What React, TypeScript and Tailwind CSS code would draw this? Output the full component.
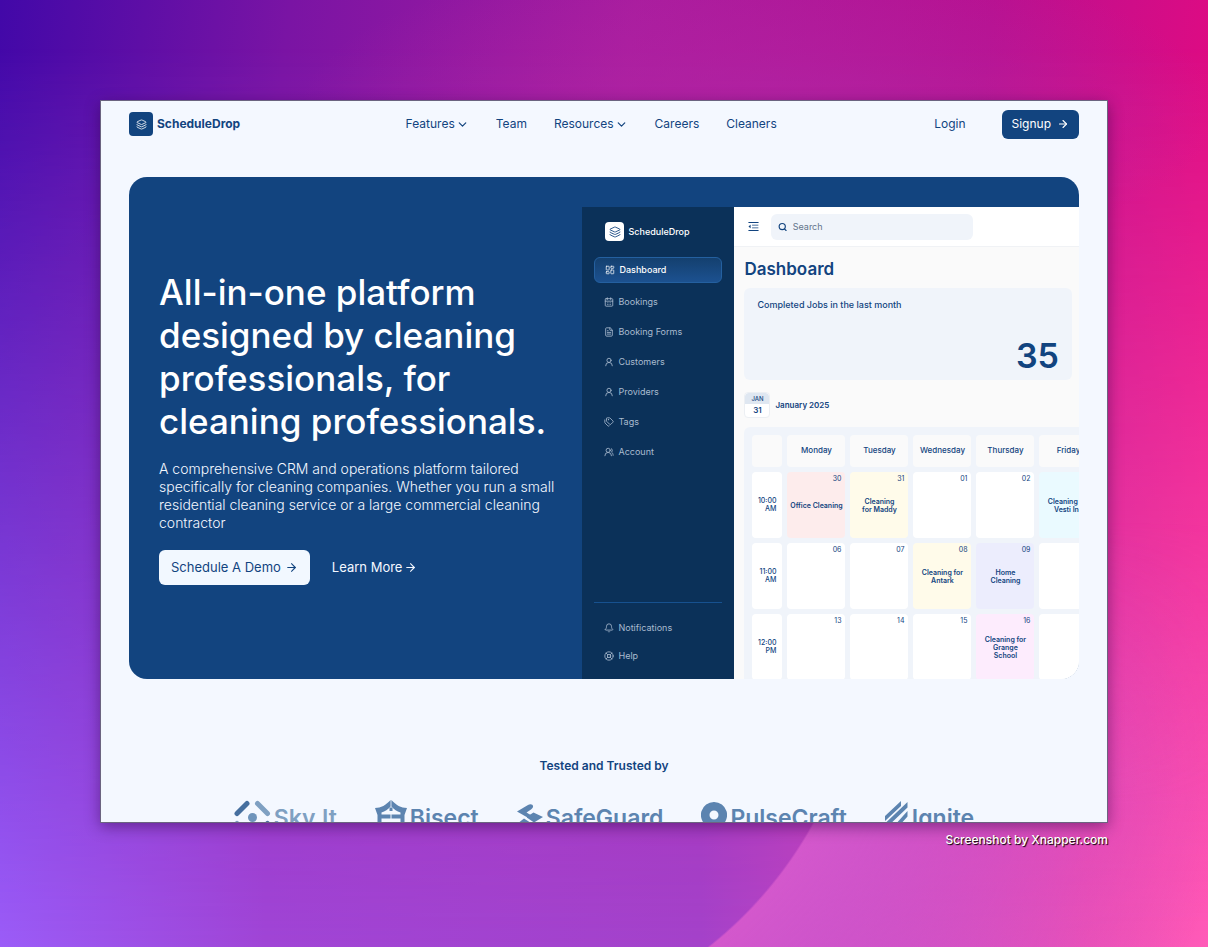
import React from "react";
import {
  ArrowRight,
  Bell,
  CalendarDays,
  ChevronDown,
  FileText,
  Layers,
  LayoutDashboard,
  LifeBuoy,
  Search,
  Tags,
  UserRound,
  UsersRound,
  type LucideIcon,
} from "lucide-react";
import { AiOutlineMenuFold } from "react-icons/ai";

type NavItem = { label: string; menu?: boolean };
type SideItem = { label: string; icon: LucideIcon };
type Day = { date?: string; event?: string; tint?: string };
type Slot = { hour: string; half: string; days: Day[] };

const navItems: NavItem[] = [
  { label: "Features", menu: true },
  { label: "Team" },
  { label: "Resources", menu: true },
  { label: "Careers" },
  { label: "Cleaners" },
];

const sideItems: SideItem[] = [
  { label: "Bookings", icon: CalendarDays },
  { label: "Booking Forms", icon: FileText },
  { label: "Customers", icon: UserRound },
  { label: "Providers", icon: UserRound },
  { label: "Tags", icon: Tags },
  { label: "Account", icon: UsersRound },
];

const footItems: SideItem[] = [
  { label: "Notifications", icon: Bell },
  { label: "Help", icon: LifeBuoy },
];

const weekdays = ["Monday", "Tuesday", "Wednesday", "Thursday", "Friday"];

const slots: Slot[] = [
  {
    hour: "10:00",
    half: "AM",
    days: [
      { date: "30", event: "Office Cleaning", tint: "bg-[#fdecec]" },
      { date: "31", event: "Cleaning\nfor Maddy", tint: "bg-[#fffbea]" },
      { date: "01" },
      { date: "02" },
      { event: "Cleaning for\nVesti Inc", tint: "bg-[#eafaff]" },
    ],
  },
  {
    hour: "11:00",
    half: "AM",
    days: [
      { date: "06" },
      { date: "07" },
      { date: "08", event: "Cleaning for\nAntark", tint: "bg-[#fffbea]" },
      { date: "09", event: "Home\nCleaning", tint: "bg-[#ecedfd]" },
      {},
    ],
  },
  {
    hour: "12:00",
    half: "PM",
    days: [
      { date: "13" },
      { date: "14" },
      { date: "15" },
      { date: "16", event: "Cleaning for\nGrange\nSchool", tint: "bg-[#fdecfd]" },
      {},
    ],
  },
];

function Backdrop() {
  return (
    <div aria-hidden="true" className="absolute inset-0 -z-10 overflow-hidden">
      <div className="absolute inset-0 bg-[linear-gradient(97deg,#4208a8_0%,#7a14a4_22%,#a81c9e_48%,#b81090_75%,#e60a80_96%)]" />
      <div className="absolute inset-0 bg-[linear-gradient(90deg,#9b5cf8_0%,#a045d6_22%,#a442ca_58%,#ee4fb4_90%,#ff5bb8_100%)] [mask-image:linear-gradient(to_bottom,transparent_5%,black_100%)]" />
      <div className="absolute inset-y-0 left-0 right-0 bg-[radial-gradient(ellipse_460px_160px_at_760px_110px,#b325a4_0%,transparent_100%)] opacity-70" />
      <div className="absolute inset-0 bg-[radial-gradient(circle_at_455px_626px,transparent_408px,#d358cc_410px,#ff5bb800_800px)] [mask-image:linear-gradient(100deg,transparent_54%,black_56%),linear-gradient(to_bottom,transparent_55%,black_85%)] [mask-composite:intersect]" />
    </div>
  );
}

function Header() {
  return (
    <header className="flex h-[46px] shrink-0 items-center justify-between px-7">
      <a href="#home" className="flex items-center gap-1 text-xs font-bold">
        <span className="flex size-6 items-center justify-center rounded bg-[#12447f] text-white">
          <Layers className="size-[11px]" strokeWidth={1.75} />
        </span>
        ScheduleDrop
      </a>
      <nav className="flex items-center gap-[27px] pl-2 text-xs">
        {navItems.map((item) =>
          item.menu ? (
            <button key={item.label} type="button" className="flex items-center gap-px">
              {item.label}
              <ChevronDown className="size-[13px]" strokeWidth={2.25} />
            </button>
          ) : (
            <a key={item.label} href={`#${item.label.toLowerCase()}`}>
              {item.label}
            </a>
          ),
        )}
      </nav>
      <div className="flex items-center gap-9 text-xs">
        <a href="#login">Login</a>
        <button
          type="button"
          className="flex h-[29px] items-center gap-1.5 rounded-md bg-[#12447f] px-2.5 text-white"
        >
          Signup
          <ArrowRight className="size-3" strokeWidth={2.25} />
        </button>
      </div>
    </header>
  );
}

function Sidebar() {
  return (
    <aside className="flex w-[152px] shrink-0 flex-col bg-[#0b3159] px-3 text-[9px] text-[#a9bbcf]">
      <div className="mt-[15px] flex items-center gap-1 pl-[11px] font-medium text-white">
        <span className="flex size-[19px] items-center justify-center rounded bg-white text-[#12447f]">
          <Layers className="size-3" strokeWidth={1.75} />
        </span>
        ScheduleDrop
      </div>
      <a
        href="#dashboard"
        className="mt-4 flex h-[26px] items-center gap-1 rounded-md border border-[#2460a0] bg-linear-to-b from-[#14406f] to-[#1c5190] pl-[10px] font-medium text-white"
      >
        <LayoutDashboard className="size-[10px]" strokeWidth={1.75} />
        Dashboard
      </a>
      <ul className="mt-1">
        {sideItems.map(({ label, icon: Icon }) => (
          <li key={label}>
            <a href="#dashboard" className="flex h-[30px] items-center gap-1 pl-[10px]">
              <Icon className="size-[10px]" strokeWidth={2} />
              {label}
            </a>
          </li>
        ))}
      </ul>
      <ul className="mt-auto mb-[9px] border-t border-[#17518f] pt-[11px]">
        {footItems.map(({ label, icon: Icon }) => (
          <li key={label}>
            <a href="#dashboard" className="flex h-7 items-center gap-1 pl-[10px]">
              <Icon className="size-[10px]" strokeWidth={2} />
              {label}
            </a>
          </li>
        ))}
      </ul>
    </aside>
  );
}

function Calendar() {
  return (
    <div className="-mb-[9px] w-max rounded-l-md bg-[#f0f4fa] p-[3px]">
      <table className="table-fixed border-separate border-spacing-[5px] text-[7px] leading-2">
        <thead>
          <tr>
            <th aria-label="Time" className="w-[30px] rounded bg-[#fafafa] p-0" />
            {weekdays.map((day) => (
              <th
                key={day}
                className="h-8 w-[58px] min-w-[58px] rounded bg-[#fafafa] p-0 pb-0.5 text-center text-[8px] font-medium"
              >
                {day}
              </th>
            ))}
          </tr>
        </thead>
        <tbody>
          {slots.map((slot) => (
            <tr key={slot.hour}>
              <th className="w-[30px] min-w-[30px] rounded bg-white p-0 pr-1.5 text-right font-medium">
                {slot.hour}
                <br />
                {slot.half}
              </th>
              {slot.days.map((day, i) => (
                <td key={i} className={`h-[66px] w-[58px] rounded p-0 ${day.tint ?? "bg-white"}`}>
                  <div className="flex h-[66px] flex-col">
                    <span className="h-3 pt-[3px] pr-1 text-right">{day.date}</span>
                    <span className="flex flex-1 items-center justify-center pb-2.5 text-center font-semibold whitespace-pre">
                      {day.event}
                    </span>
                  </div>
                </td>
              ))}
            </tr>
          ))}
        </tbody>
      </table>
    </div>
  );
}

function DashboardPreview() {
  return (
    <div className="mt-[30px] flex min-w-0 overflow-hidden">
      <Sidebar />
      <div className="flex min-w-0 flex-1 flex-col bg-[#fafafa]">
        <div className="flex h-10 shrink-0 items-center gap-[11px] border-b border-[#f0f2f5] bg-white pl-[13px]">
          <button type="button" aria-label="Collapse menu">
            <AiOutlineMenuFold className="size-[13px]" />
          </button>
          <label className="flex h-[26px] w-[202px] items-center gap-[5px] rounded-md bg-[#f0f4fa] px-[7px]">
            <Search className="size-[10px]" strokeWidth={3} />
            <input
              type="search"
              aria-label="Search"
              placeholder="Search"
              className="w-full min-w-0 bg-transparent text-[9px] outline-none placeholder:text-[#64748b]"
            />
          </label>
        </div>
        <div className="flex flex-col overflow-hidden pl-[10px]">
          <h2 className="mt-3 text-[17px] leading-5 font-semibold">Dashboard</h2>
          <section className="mt-[9px] mr-[7px] flex h-[92px] flex-col justify-between rounded-md bg-[#f0f4fa] px-[13px] pt-[11px] pb-1.5">
            <h3 className="text-[9px] leading-3 font-medium">Completed Jobs in the last month</h3>
            <p className="text-right text-[34px] leading-9 font-semibold">35</p>
          </section>
          <div className="mt-3 mb-[9px] flex items-center gap-[5px]">
            <div className="flex h-[26px] w-[26px] flex-col overflow-hidden rounded border border-[#eceff3] bg-white text-center">
              <span className="rounded-t-sm bg-[#dfe7f1] text-[6px] leading-[11px] font-medium">JAN</span>
              <span className="text-[8px] leading-[13px] font-semibold">31</span>
            </div>
            <p className="text-[8px] leading-3 font-semibold">January 2025</p>
          </div>
          <Calendar />
        </div>
      </div>
    </div>
  );
}

function Hero() {
  return (
    <section className="mx-7 mt-[30px] grid shrink-0 grid-cols-[453fr_496fr] overflow-hidden rounded-[18px] bg-[#12447f] text-[#f4f8ff]">
      <div className="flex flex-col justify-center pr-6 pl-[30px]">
        <h1 className="text-[35px] leading-[43px] font-medium text-white">
          All-in-one platform
          <br />
          designed by cleaning
          <br />
          professionals, for
          <br />
          cleaning professionals.
        </h1>
        <p className="mt-[17px] text-[14px] leading-[18px] font-light">
          A comprehensive CRM and operations platform tailored specifically for cleaning companies.
          Whether you run a small residential cleaning service or a large commercial cleaning contractor
        </p>
        <div className="mt-[18px] flex items-center gap-[22px] text-[13px]">
          <button
            type="button"
            className="flex h-[35px] items-center gap-1 rounded-md bg-[#f2f8ff] px-3 text-[#12447f]"
          >
            Schedule A Demo
            <ArrowRight className="size-[13px]" strokeWidth={2} />
          </button>
          <a href="#features" className="flex items-center gap-0.5">
            Learn More
            <ArrowRight className="size-[13px]" strokeWidth={2} />
          </a>
        </div>
      </div>
      <div className="flex min-w-0 text-[#12447f] [&>div]:flex-1">
        <DashboardPreview />
      </div>
    </section>
  );
}

function SkyMark() {
  return (
    <svg viewBox="0 0 37 37" className="size-[37px]" fill="none" strokeWidth="5" strokeLinecap="round">
      <path d="M3 13.500 13 3.500" stroke="#466f9f" />
      <path d="M23.500 3.500 33.500 13.500M3 23.500 13 33.500" stroke="#7fa0c2" />
      <path d="M33.500 23.500 23.500 33.500" stroke="#466f9f" />
      <circle cx="18.500" cy="17.500" r="4.500" fill="#6f94bb" />
    </svg>
  );
}

function BisectMark() {
  return (
    <svg viewBox="0 0 32 32" className="size-8" fill="currentColor">
      <path d="M15.600 0v6.500C13 9.500 10 11.500 6.500 12.500V14.500h9V18.500h-9v9L2.500 31V15L0 8c6 0 11-3 15.600-8Z" />
      <path d="M16.400 0v6.500c2.600 3 5.600 5 9.100 6V14.500h-9V18.500h9v9l4 3.500V15L32 8c-6 0-11-3-15.600-8Z" />
      <path d="M14.500 7.500h3v3.500h-3Z" />
    </svg>
  );
}

function SafeMark() {
  return (
    <svg viewBox="0 0 26 28" className="mt-1 h-7 w-[26px]" fill="currentColor">
      <path d="M0 7.500 11 1c3-1.800 6 0 4.800 2.600-.4.900-1 1.300-1.800 1.900l-4.500 3 5 3L10.500 13.500Z" />
      <path d="m26 13-9.500-4.500-6 3.800c-.8.600-.8 1.200 0 1.700L17 18.500Z" />
      <path d="M0 20 7 14.500l8.500 5.500-6 5Z" />
    </svg>
  );
}

function PulseMark() {
  return (
    <svg viewBox="0 0 26 28" className="mt-0.5 h-7 w-[26px]" fill="currentColor">
      <path
        fillRule="evenodd"
        d="M13 0a13 13 0 0 1 7 24l-7 4-7-4A13 13 0 0 1 13 0Zm0 8.500a4.500 4.500 0 1 0 0 9 4.500 4.500 0 0 0 0-9Z"
      />
    </svg>
  );
}

function IgniteMark() {
  return (
    <svg viewBox="0 0 24 28" className="mt-px h-7 w-6" fill="currentColor">
      <path d="M0 15 16 0v5L0 20ZM0 22.500 22.500 1v5.500L0 28ZM9 25 22.500 10v5.500L14 25Z" />
    </svg>
  );
}

const brands = [
  { name: "Sky.It", mark: <SkyMark />, tone: "text-[#7fa0c2]" },
  { name: "Bisect", mark: <BisectMark />, tone: "text-[#5c84b0]" },
  { name: "SafeGuard", mark: <SafeMark />, tone: "text-[#5c84b0]" },
  { name: "PulseCraft", mark: <PulseMark />, tone: "text-[#5c84b0]" },
  { name: "Ignite", mark: <IgniteMark />, tone: "text-[#5c84b0]" },
];

function TrustedBy() {
  return (
    <section className="mt-[77px] shrink-0 text-center">
      <h2 className="text-[12px] leading-5 font-semibold">Tested and Trusted by</h2>
      <ul className="mt-6 flex justify-center gap-[38px]">
        {brands.map((brand) => (
          <li
            key={brand.name}
            className={`flex items-start gap-[3px] text-[23px] leading-9 font-semibold ${brand.tone}`}
          >
            {brand.mark}
            {brand.name}
          </li>
        ))}
      </ul>
    </section>
  );
}

export default function App() {
  return (
    <div className="relative isolate flex h-screen flex-col px-[100px] pt-[100px] font-['Inter',sans-serif]">
      <Backdrop />
      <main className="flex min-h-0 flex-1 flex-col overflow-hidden border border-[#6b6480] bg-[#f4f8ff] text-[#12447f] shadow-[0_4px_14px_rgba(40,0,60,0.45)]">
        <Header />
        <Hero />
        <TrustedBy />
      </main>
      <footer className="h-31 shrink-0 pt-[7px] text-right text-xs leading-5 font-medium text-white [text-shadow:1px_1px_1px_#000]">
        Screenshot by Xnapper.com
      </footer>
    </div>
  );
}
